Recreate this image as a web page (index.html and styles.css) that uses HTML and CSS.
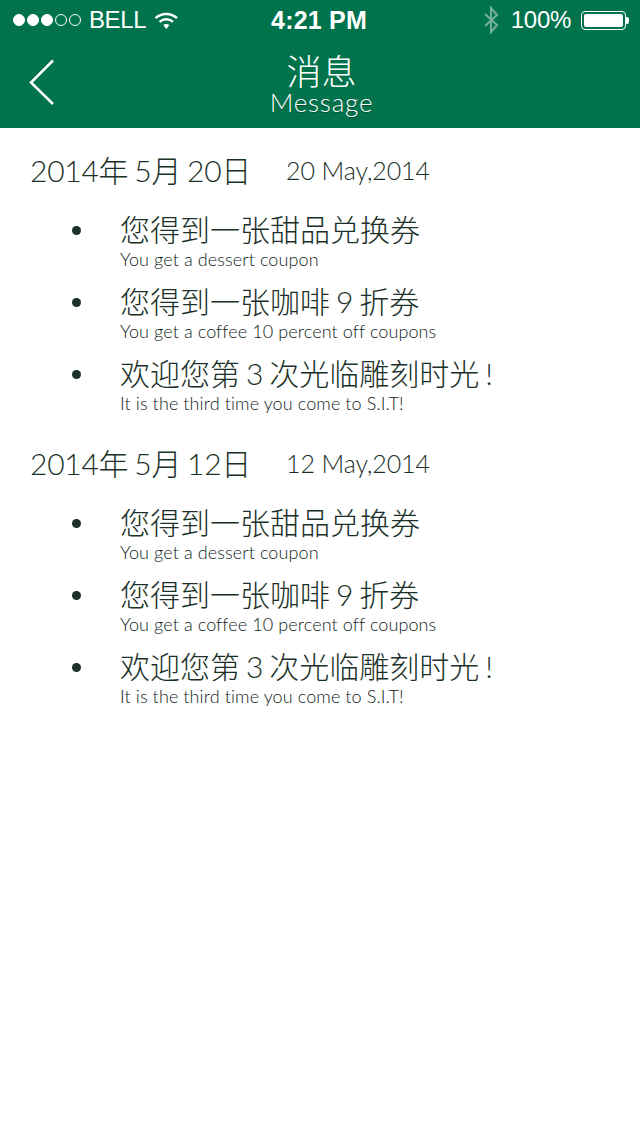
FILE: index.html
```html
<!DOCTYPE html>
<html lang="zh-CN">
<head>
<meta charset="utf-8">
<title>消息</title>
<link rel="stylesheet" href="styles.css">
</head>
<body>
<header class="header">
  <div class="status">
    <div class="status-left">
      <span class="dots"><i class="dot on"></i><i class="dot on"></i><i class="dot on"></i><i class="dot"></i><i class="dot"></i></span>
      <span class="carrier">BELL</span>
      <svg class="wifi" width="25" height="19" viewBox="0 0 25 19"><path d="M1.500 7.200C7.500 1.600 17 1.600 23 7.200" fill="none" stroke="#fff" stroke-width="2.400"/><path d="M5.600 10.800C9.600 7.300 15 7.300 19 10.800" fill="none" stroke="#fff" stroke-width="2.400"/><path d="M9.200 14C11 12.600 13.600 12.600 15.400 14L12.300 18Z" fill="#fff"/></svg>
    </div>
    <div class="time">4:21 PM</div>
    <div class="status-right">
      <svg class="bt" width="17" height="28" viewBox="0 0 17 28"><path d="M2 8L14 19L8 26V2L14 9L2 20" fill="none" stroke="#fff" stroke-opacity=".45" stroke-width="2"/></svg>
      <span class="battery-text">100%</span>
      <span class="battery"><span class="battery-fill"></span></span><span class="battery-cap"></span>
    </div>
  </div>
  <div class="nav">
    <svg class="back" width="26" height="46" viewBox="0 0 26 46"><path d="M24 1.500L2 23.500L24 45" fill="none" stroke="#fff" stroke-width="2.500"/></svg>
    <div class="nav-title">
      <div class="title-zh">消息</div>
      <div class="title-en">Message</div>
    </div>
  </div>
</header>
<main class="content">
  <section class="day">
    <div class="date"><span class="date-zh">2014年 5月 20日</span><span class="date-en">20 May,2014</span></div>
    <ul class="list">
      <li class="item"><div class="zh">您得到一张甜品兑换券</div><div class="en">You get a dessert coupon</div></li>
      <li class="item"><div class="zh">您得到一张咖啡 9 折券</div><div class="en">You get a coffee 10 percent off coupons</div></li>
      <li class="item"><div class="zh">欢迎您第 3 次光临雕刻时光 !</div><div class="en">It is the third time you come to S.I.T!</div></li>
    </ul>
  </section>
  <section class="day">
    <div class="date"><span class="date-zh">2014年 5月 12日</span><span class="date-en">12 May,2014</span></div>
    <ul class="list">
      <li class="item"><div class="zh">您得到一张甜品兑换券</div><div class="en">You get a dessert coupon</div></li>
      <li class="item"><div class="zh">您得到一张咖啡 9 折券</div><div class="en">You get a coffee 10 percent off coupons</div></li>
      <li class="item"><div class="zh">欢迎您第 3 次光临雕刻时光 !</div><div class="en">It is the third time you come to S.I.T!</div></li>
    </ul>
  </section>
</main>
</body>
</html>
```

FILE: styles.css
```css
* { box-sizing: border-box; }
html, body { margin: 0; padding: 0; }
body {
  width: 640px;
  height: 1136px;
  background: #fff;
  color: #1a3028;
  font-family: "Lato", "Noto Sans CJK SC", sans-serif;
  font-weight: 300;
  overflow: hidden;
}
.header { background: #00734d; color: #fff; height: 128px; }
.status {
  height: 40px;
  display: grid;
  grid-template-columns: 1fr auto 1fr;
  align-items: center;
  padding: 0 11px 0 13px;
}
.status-left { display: flex; align-items: center; gap: 8px; }
.dots { display: flex; gap: 2px; }
.dot { width: 12px; height: 12px; border-radius: 50%; border: 1px solid #fff; display: block; }
.dot.on { background: #fff; }
.carrier { font: 400 24px/30px "Liberation Sans", sans-serif; letter-spacing: -0.4px; }
.time { font: 700 25px/30px "Liberation Sans", sans-serif; letter-spacing: 0.2px; transform: translateX(-2px); }
.status-right { display: flex; align-items: center; justify-content: flex-end; }
.bt { margin-right: 11px; }
.battery-text { font: 400 24px/30px "Liberation Sans", sans-serif; margin-right: 10px; letter-spacing: -0.3px; }
.battery { width: 45px; height: 19px; border: 1px solid #fff; border-radius: 4px; padding: 2px; display: block; }
.battery-fill { display: block; height: 100%; background: #fff; border-radius: 2px; }
.battery-cap { width: 3px; height: 7px; background: #fff; border-radius: 0 2px 2px 0; }
.nav { height: 88px; position: relative; display: flex; justify-content: center; }
.back { position: absolute; left: 29px; top: 19px; }
.nav-title { text-align: center; padding-top: 11px; margin-left: 3px; }
.title-zh { font-size: 35px; line-height: 38px; font-family: "Noto Sans CJK SC", sans-serif; }
.title-en { font-size: 26px; line-height: 26px; letter-spacing: 0.8px; text-shadow: 0 1px 1px rgba(0, 0, 0, 0.35); }
.content { padding: 18px 0 0 30px; }
.day { height: 293px; }
.date { display: flex; align-items: flex-start; height: 48px; }
.date-zh { font-size: 30px; line-height: 48px; width: 256px; white-space: nowrap; word-spacing: -2px; letter-spacing: -0.25px; }
.date-en { font-size: 25px; line-height: 48px; letter-spacing: -0.1px; }
.list { list-style: none; margin: 14px 0 0; padding: 0; }
.item { position: relative; padding-left: 90px; height: 72px; }
.item::before {
  content: "";
  position: absolute;
  left: 42px;
  top: 18px;
  width: 9px;
  height: 9px;
  border-radius: 50%;
  background: #1a3028;
}
.zh { font-size: 30px; line-height: 43px; white-space: nowrap; word-spacing: -2.2px; }
.en { font-size: 18px; line-height: 20px; margin-top: -2px; letter-spacing: 0.1px; white-space: nowrap; color: #10241c; }
```
